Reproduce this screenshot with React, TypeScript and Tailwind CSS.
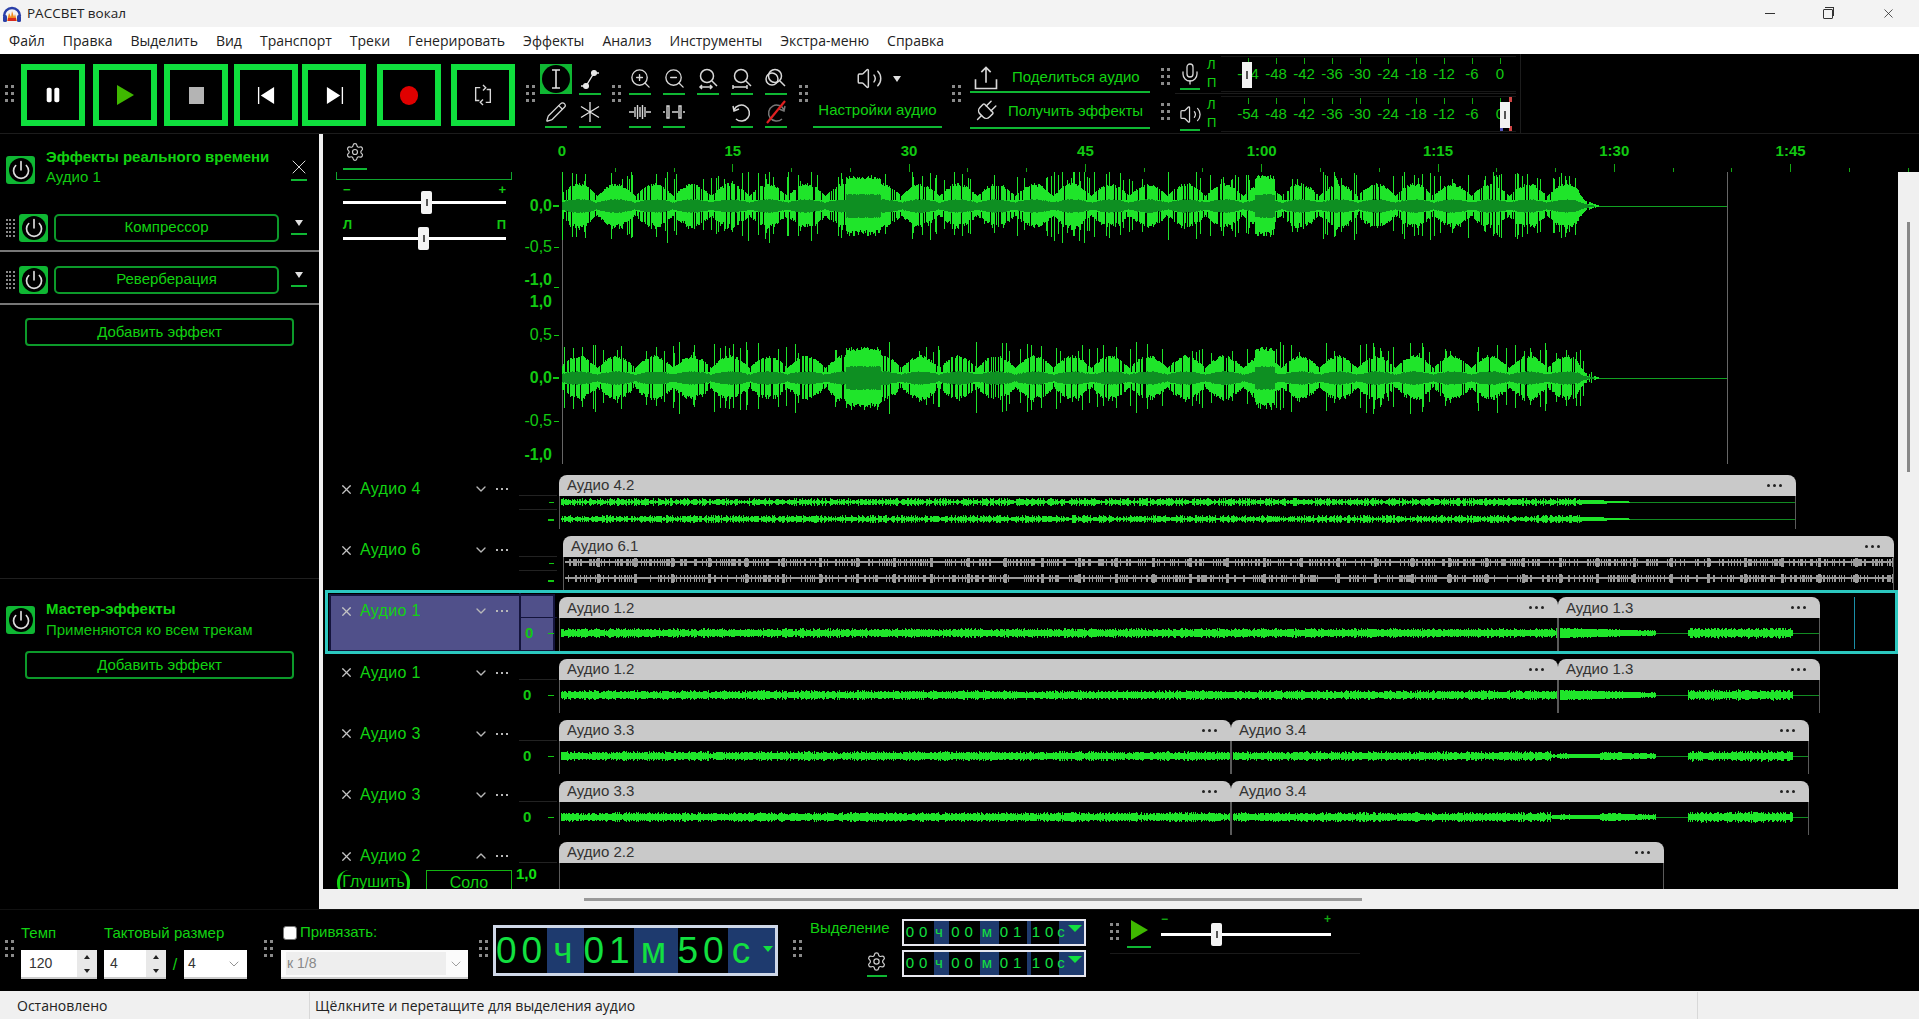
import React from 'react';
import { ChevronDown, ChevronUp, Mic, Pencil, Plug, Power, Settings, Volume2, X, ZoomIn, ZoomOut } from 'lucide-react';

const rng = (seed: number) => () => {
  seed = (seed + 0x6d2b79f5) | 0;
  let t = Math.imul(seed ^ (seed >>> 15), 1 | seed);
  t = (t + Math.imul(t ^ (t >>> 7), 61 | t)) ^ t;
  return ((t ^ (t >>> 14)) >>> 0) / 4294967296;
};

const mainWave = (seed: number, cy: number) => {
  const r = rng(seed);
  let bright = '';
  let dark = '';
  for (let x = 3; x < 1040; x++) {
    const phase = (x % 38) / 38;
    const loud = (x > 286 && x < 322) || (x > 695 && x < 716);
    let a = 10 + 12 * Math.sin(Math.PI * phase) * (0.8 + r() * 0.3);
    const roll = r();
    if (roll < 0.12) a = 25 + r() * 11;
    else if (roll < 0.26) a = 6;
    if (loud) a = 27 + r() * 4;
    let core = 3 + 3 * Math.sin(Math.PI * phase) + r();
    if (loud) core = 11 + r();
    const fade = x > 1018 ? Math.max(0.04, ((1040 - x) / 22) ** 1.6) : 1;
    a *= fade;
    core *= fade;
    bright += `M${x + 0.5} ${(cy - a).toFixed(1)}V${(cy + a * (0.85 + r() * 0.2)).toFixed(1)}`;
    dark += `M${x + 0.5} ${(cy - core).toFixed(1)}V${(cy + core).toFixed(1)}`;
  }
  return { bright, dark };
};

const smallWave = (kind: string, seed: number, offset: number, width: number, cy: number) => {
  const r = rng(seed + offset);
  let d = '';
  let flat = '';
  for (let x = 1; x < width; x++) {
    const g = offset + x;
    let a = 0;
    if (kind === 'a4') {
      a = g < 1020 ? 1.5 + r() * 2.5 : g < 1070 ? 2.5 - (g - 1020) * 0.04 : 0;
      if (r() < 0.15 && g < 1020) a = 1;
    } else if (kind === 'a6') {
      a = r() < 0.35 ? 3.5 : 1.2;
      if (g % 37 < 3) a = 4.5;
    } else {
      if (g < 1000) a = 2.4 + r() * 2.4;
      else if (g < 1096) a = 4.5 - ((g - 1000) / 96) * 2.8 + r();
      else if (g < 1128) a = 0;
      else if (g < 1233) a = 2.6 + r() * 3;
      if (kind === 'a3' && g > 990 && g < 1040) a *= 0.5;
    }
    if (a > 0) d += `M${x + 0.5} ${(cy - a).toFixed(1)}V${(cy + a).toFixed(1)}`;
    else flat += `M${x} ${cy + 0.5}h1`;
  }
  return { d, flat };
};

const Grip = ({ dense }: { dense?: boolean }) => (
  <div className={dense ? 'grid grid-cols-3 gap-[2px] w-[8px]' : 'grid grid-cols-2 gap-[4px] w-[8px]'}>
    {Array.from({ length: dense ? 15 : 6 }).map((_, i) => (
      <span key={i} className={dense ? 'w-[2px] h-[2px] bg-[#8a8a8a]' : 'w-[3px] h-[3px] bg-[#8a8a8a]'} />
    ))}
  </div>
);

const PowerBtn = () => (
  <div className="w-[29px] h-[28px] bg-[#0fb733] rounded-[3px] flex items-center justify-center shrink-0">
    <div className="w-[24px] h-[24px] rounded-full bg-black flex items-center justify-center">
      <Power size={20} strokeWidth={2} className="text-[#dddddd]" />
    </div>
  </div>
);

const TransportBtn = ({ children, className }: { children: React.ReactNode; className?: string }) => (
  <div className={`w-[64px] h-[62px] border-[6px] border-[#0fdf3d] flex items-center justify-center shrink-0 ${className ?? ''}`}>
    {children}
  </div>
);

const Tool = ({ children, bar = true }: { children: React.ReactNode; bar?: boolean }) => (
  <div className="relative w-[34px] h-[33px] flex items-center justify-center shrink-0">
    {children}
    {bar && <span className="absolute bottom-0 left-[6px] w-[22px] h-[2px] bg-[#0fb733]" />}
  </div>
);

const ic = 'w-[24px] h-[24px] text-[#d8d8d8]';

const FitIcon = ({ mode }: { mode: string }) => (
  <svg viewBox="0 0 24 24" className={ic} fill="none" stroke="currentColor" strokeWidth="1.5">
    <circle cx="11" cy="9" r="6.5" />
    <path d="M16 14l5 5" />
    {mode === 'sel' && <path d="M4 20h12M6 18l-2 2 2 2M14 18l2 2-2 2" />}
    {mode === 'fit' && <path d="M3 18v4M3 20h14M17 18v4" />}
    {mode === 'tog' && <circle cx="8" cy="12" r="6" />}
  </svg>
);

const TrimIcon = ({ wide }: { wide?: boolean }) => (
  <svg viewBox="0 0 24 24" className={ic} fill="none" stroke="currentColor" strokeWidth="1.4">
    {wide ? (
      <path d="M1 12h2M5 6v12h2V6zM10 12h6M17 6v12h2V6zM21 12h2" />
    ) : (
      <path d="M1 12h5M7 7v10M9.5 5v14M12 7v10M14.5 5v14M17 7v10M18 12h5" />
    )}
  </svg>
);

const Digits = ({ big, cells }: { big?: boolean; cells: { t: string; w: number; dark: boolean; caret?: boolean }[] }) => (
  <div className={big ? 'flex h-[51px] w-[285px] border-[3px] border-[#cfd8e8] bg-[#1e3a6e] shrink-0' : 'flex h-[27px] w-[184px] border-[2px] border-[#e8e8f0] bg-[#1e3a6e] shrink-0'}>
    {cells.map((c, i) => (
      <div
        key={i}
        style={{ width: c.w }}
        className={`relative flex items-center justify-center h-full text-[#12e040] ${c.dark ? 'bg-black' : 'bg-[#1e3a6e]'} ${big ? 'text-[37px] tracking-[5px]' : 'text-[15px] tracking-[5px]'}`}
      >
        <span className={c.caret ? 'mr-[16px]' : ''}>{c.t}</span>
        {c.caret && (
          <span className={big ? 'absolute right-[2px] top-[18px] border-x-[5px] border-x-transparent border-t-[6px] border-t-[#12e040]' : 'absolute right-[2px] top-[4px] border-x-[7px] border-x-transparent border-t-[7px] border-t-[#12e040]'} />
        )}
      </div>
    ))}
  </div>
);

const smallCells = [
  { t: '00', w: 30, dark: true },
  { t: 'ч', w: 15, dark: false },
  { t: '00', w: 31, dark: true },
  { t: 'м', w: 19, dark: false },
  { t: '01', w: 28, dark: true },
  { t: '', w: 4, dark: false },
  { t: '10', w: 28, dark: true },
  { t: 'с', w: 25, dark: false, caret: true },
];

const Slider = ({ pos, width = 163 }: { pos: number; width?: number }) => (
  <div className="relative h-[3px] bg-white" style={{ width }}>
    <div className="absolute top-[-10px] w-[11px] h-[23px] bg-[#f4f4f4] rounded-[2px] flex items-center justify-center" style={{ left: pos }}>
      <span className="w-[2px] h-[7px] bg-[#555555]" />
    </div>
  </div>
);

const Meter = ({ handle, hot }: { handle: number; hot?: boolean }) => (
  <div className="flex items-center h-[40px]">
    <div className="w-[14px] flex flex-col text-[13px] leading-[18px] text-[#12d312] shrink-0">
      <span>Л</span>
      <span>П</span>
    </div>
    <div className="relative w-[295px] h-[36px] border-y border-[#181818]">
      {['-54', '-48', '-42', '-36', '-30', '-24', '-18', '-12', '-6', '0'].map((v, i) => (
        <span key={v} className="absolute top-[8px] w-[30px] text-center text-[15px] leading-[18px] text-[#12c912]" style={{ left: 12 + i * 28 }}>
          {v}
        </span>
      ))}
      {Array.from({ length: 10 }).map((_, i) => (
        <span key={i} className="absolute top-[1px] w-px h-[6px] bg-[#12a912]" style={{ left: 27 + i * 28 }} />
      ))}
      {hot && (
        <>
          <span className="absolute left-[288px] top-0 w-[3px] h-[5px] bg-[#d04545]" />
          <span className="absolute left-[288px] bottom-0 w-[3px] h-[5px] bg-[#d04545]" />
          <span className="absolute left-[279px] bottom-0 w-[3px] h-[5px] bg-[#5555bb]" />
        </>
      )}
      <div className="absolute top-[5px] w-[10px] h-[26px] bg-[#f2f2f2] flex items-center justify-center" style={{ left: handle }}>
        <span className="w-[2px] h-[8px] bg-[#555555]" />
      </div>
    </div>
  </div>
);

type ClipDef = { label: string; x: number; w: number };
type TrackDef = { name: string; kind: string; clips: ClipDef[]; selected?: boolean; up?: boolean; channels: number[]; seed: number };

const a1 = [
  { label: 'Аудио 1.2', x: 0, w: 999 },
  { label: 'Аудио 1.3', x: 999, w: 262 },
];
const a3 = [
  { label: 'Аудио 3.3', x: 0, w: 672 },
  { label: 'Аудио 3.4', x: 672, w: 578 },
];
const tracks: TrackDef[] = [
  { name: 'Аудио 4', kind: 'a4', clips: [{ label: 'Аудио 4.2', x: 0, w: 1237 }], channels: [6, 23], seed: 11 },
  { name: 'Аудио 6', kind: 'a6', clips: [{ label: 'Аудио 6.1', x: 4, w: 1331 }], channels: [5, 21], seed: 21 },
  { name: 'Аудио 1', kind: 'a1', clips: a1, selected: true, channels: [15], seed: 31 },
  { name: 'Аудио 1', kind: 'a1', clips: a1, channels: [15], seed: 32 },
  { name: 'Аудио 3', kind: 'a3', clips: a3, channels: [15], seed: 41 },
  { name: 'Аудио 3', kind: 'a3', clips: a3, channels: [15], seed: 42 },
  { name: 'Аудио 2', kind: 'none', clips: [{ label: 'Аудио 2.2', x: 0, w: 1105 }], up: true, channels: [], seed: 51 },
];

const Clip = ({ clip, track, left }: { clip: ClipDef; track: TrackDef; left: number }) => (
  <div className="shrink-0 h-[54px] flex flex-col" style={{ width: clip.w, marginLeft: left }}>
    <div className="h-[21px] bg-[#c9c9c9] rounded-t-[8px] flex items-center justify-between pl-[8px] pr-[14px] text-[15px] text-[#333333]">
      <span>{clip.label}</span>
      <span className="flex gap-[3px]">
        <i className="w-[3px] h-[3px] rounded-full bg-[#222222]" />
        <i className="w-[3px] h-[3px] rounded-full bg-[#222222]" />
        <i className="w-[3px] h-[3px] rounded-full bg-[#222222]" />
      </span>
    </div>
    <div className="h-[33px] border-x border-[#5a5a5a]">
      <svg width={clip.w - 2} height={33} className="block" shapeRendering="crispEdges">
        {track.channels.map((cy, i) => {
          const w = smallWave(track.kind, track.seed + i, clip.x, clip.w - 2, cy);
          return (
            <g key={i}>
              <path d={w.d} stroke={track.kind === 'a6' ? '#9a9a9a' : '#1fe52a'} strokeWidth="1" fill="none" />
              <path d={w.flat} stroke="#128a22" strokeWidth="1" fill="none" />
            </g>
          );
        })}
      </svg>
    </div>
  </div>
);

const TrackRow = ({ track }: { track: TrackDef }) => {
  const sel = track.selected;
  return (
    <div className="relative flex h-[61.2px] shrink-0">
      {sel && <div className="absolute left-[6px] top-[3px] w-[226px] h-[58px] bg-[#50508a] border-2 border-[#14143c]" />}
      {sel && <div className="absolute left-[2px] right-0 top-[-1px] h-[64px] border-[3px] border-[#2cc8c0] z-20 pointer-events-none" />}
      <div className="relative w-[236px] shrink-0 flex">
        <div className="w-[196px] shrink-0 relative">
          <div className="flex items-center h-[24px] mt-[8px] pl-[16px]">
            <X size={15} className="text-[#c4c4c4] w-[15px] shrink-0" />
            <span className="ml-[6px] w-[108px] text-[16px] tracking-[0.3px] text-[#12d312]">{track.name}</span>
            {track.up ? <ChevronUp size={16} className="text-[#b8b8b8] ml-[5px]" /> : <ChevronDown size={16} className="text-[#b8b8b8] ml-[5px]" />}
            <span className="ml-[7px] flex gap-[3px]">
              <i className="w-[2px] h-[2px] bg-[#b8b8b8]" />
              <i className="w-[2px] h-[2px] bg-[#b8b8b8]" />
              <i className="w-[2px] h-[2px] bg-[#b8b8b8]" />
            </span>
          </div>
          {track.up && (
            <div className="flex mt-[2px] pl-[14px] gap-[16px] text-[16px] text-[#12d312]">
              <div className="w-[73px] h-[26px] rounded-[12px] border-x-[3px] border-[#12d312] text-center">Глушить</div>
              <div className="w-[86px] h-[26px] border border-[#12b512] text-center">Соло</div>
            </div>
          )}
        </div>
        <div className={`relative w-[38px] shrink-0 ${sel ? 'border-l-2 border-[#14143c]' : ''}`}>
          <span className={`absolute left-0 right-0 top-[26px] h-px ${sel ? 'bg-[#14143c] h-[2px]' : 'bg-[#222222]'}`} />
          {track.channels.length === 2 && (
            <>
              <span className="absolute left-0 right-0 top-[40px] h-px bg-[#222222]" />
              <span className="absolute right-[3px] top-[33px] w-[5px] h-[1px] bg-[#12c912]" />
              <span className="absolute right-[3px] top-[50px] w-[6px] h-[2px] bg-[#12c912]" />
            </>
          )}
          {track.channels.length === 1 && (
            <>
              <span className="absolute left-[4px] top-[32px] text-[15px] leading-[20px] font-bold text-[#12c912]">0</span>
              <span className="absolute right-[3px] top-[42px] w-[6px] h-[1px] bg-[#12c912]" />
            </>
          )}
          {track.up && <span className="absolute left-[-3px] top-[28px] text-[15px] leading-[20px] font-bold text-[#12e012]">1,0</span>}
        </div>
      </div>
      <div className="flex pt-[6px]">
        {track.clips.map((c, i) => (
          <Clip key={i} clip={c} track={track} left={i === 0 ? c.x : 0} />
        ))}
      </div>
      {sel && <span className="absolute left-[1531px] top-[6px] w-px h-[52px] bg-[#1a8fa8]" />}
    </div>
  );
};

const axis = [
  { y: 34, t: '0,0', b: true },
  { y: 75, t: '-0,5' },
  { y: 108, t: '-1,0', b: true },
  { y: 130, t: '1,0', b: true },
  { y: 163, t: '0,5' },
  { y: 206, t: '0,0', b: true },
  { y: 249, t: '-0,5' },
  { y: 283, t: '-1,0', b: true },
];

const wave1 = mainWave(7, 34);
const wave2 = mainWave(8, 206);

const rulerLabels = ['0', '15', '30', '45', '1:00', '1:15', '1:30', '1:45'];

export default function App() {
  return (
    <div className="w-[1919px] h-[1019px] overflow-hidden flex flex-col bg-black font-['Liberation_Sans',Arial,sans-serif]">
      {/* title bar */}
      <div className="h-[27px] shrink-0 bg-[#f3f3f3] flex items-center text-[14px] text-[#222222] font-['Open_Sans',sans-serif]">
        <svg viewBox="0 0 20 20" className="w-[20px] h-[20px] ml-[2px]">
          <path d="M2 12a8 8 0 0116 0" fill="none" stroke="#2a3fa8" strokeWidth="2.4" />
          <rect x="1" y="11" width="4" height="7" rx="1.5" fill="#2a3fa8" />
          <rect x="15" y="11" width="4" height="7" rx="1.5" fill="#2a3fa8" />
          <path d="M5 17l2-8 2 4 1-6 2 6 1-3 2 7z" fill="#f08a1e" />
          <rect x="6" y="14" width="8" height="3" fill="#d92b20" />
        </svg>
        <span className="ml-[5px] text-[13.5px]">РАССВЕТ вокал</span>
        <div className="ml-auto flex items-center text-[#222222]">
          <div className="w-[58px] flex justify-center">
            <span className="w-[10px] h-px bg-[#333333]" />
          </div>
          <div className="w-[58px] flex justify-center">
            <span className="relative w-[10px] h-[10px] border border-[#333333] rounded-[1px] bg-[#f3f3f3] after:content-[''] after:absolute after:left-[1px] after:top-[-3px] after:w-[9px] after:h-[9px] after:border-t after:border-r after:border-[#333333]" />
          </div>
          <div className="w-[62px] flex justify-center">
            <X size={15} strokeWidth={1.2} />
          </div>
        </div>
      </div>

      {/* menu bar */}
      <div className="h-[27px] shrink-0 bg-white flex items-center gap-[18px] pl-[9px] text-[14px] text-[#222222] font-['Open_Sans',sans-serif]">
        {['Файл', 'Правка', 'Выделить', 'Вид', 'Транспорт', 'Треки', 'Генерировать', 'Эффекты', 'Анализ', 'Инструменты', 'Экстра-меню', 'Справка'].map((m) => (
          <span key={m}>{m}</span>
        ))}
      </div>

      {/* top toolbars */}
      <div className="h-[80px] shrink-0 flex bg-black border-b border-[#1c1c1c]">
        <div className="w-[21px] flex items-center pl-[5px] shrink-0">
          <Grip />
        </div>
        <div className="flex pt-[10px] w-[494px] shrink-0">
          <TransportBtn>
            <svg viewBox="0 0 20 20" className="w-[18px] h-[18px]"><rect x="3" y="2" width="5.5" height="16" rx="2" fill="#fff" /><rect x="11.5" y="2" width="5.5" height="16" rx="2" fill="#fff" /></svg>
          </TransportBtn>
          <TransportBtn className="ml-[8px]">
            <svg viewBox="0 0 20 20" className="w-[20px] h-[20px]"><path d="M2 0l17 10L2 20z" fill="#3fb800" /></svg>
          </TransportBtn>
          <TransportBtn className="ml-[7px]">
            <span className="w-[15px] h-[17px] bg-[#b4b4b4]" />
          </TransportBtn>
          <TransportBtn className="ml-[6px]">
            <svg viewBox="0 0 20 20" className="w-[19px] h-[19px]"><path d="M1 1h1.4v18H1zM18 1v18L4 10z" fill="#fff" /></svg>
          </TransportBtn>
          <TransportBtn className="ml-[4px]">
            <svg viewBox="0 0 20 20" className="w-[19px] h-[19px]"><path d="M17.6 1H19v18h-1.4zM2 1v18l14-9z" fill="#fff" /></svg>
          </TransportBtn>
          <TransportBtn className="ml-[11px]">
            <span className="w-[18px] h-[19px] rounded-full bg-[#e00000]" />
          </TransportBtn>
          <TransportBtn className="ml-[10px]">
            <svg viewBox="0 0 24 24" className="w-[22px] h-[22px]" fill="none" stroke="#d8d8d8" strokeWidth="1.5">
              <path d="M9 4H4v14h4M15 20h5V6h-4M12 1l3 3-3 3M12 17l-3 3 3 3" />
            </svg>
          </TransportBtn>
        </div>
        <div className="w-[24px] flex items-center pl-[11px] shrink-0"><Grip /></div>
        <div className="w-[68px] pt-[8px] shrink-0 flex flex-wrap content-start">
          <div className="relative w-[34px] h-[33px] flex items-center justify-center">
            <div className="w-[32px] h-[30px] bg-[#0fb733] flex items-center justify-center">
              <div className="w-[28px] h-[28px] rounded-full bg-black flex items-center justify-center">
                <svg viewBox="0 0 24 24" className="w-[24px] h-[24px]" fill="none" stroke="#e0e0e0" strokeWidth="1.6"><path d="M8 3h8M12 3v18M8 21h8" /></svg>
              </div>
            </div>
          </div>
          <Tool>
            <svg viewBox="0 0 24 24" className="w-[24px] h-[24px]" fill="#e8e8e8" stroke="#e8e8e8" strokeWidth="1.3"><path d="M3 19h5l8-13h5" fill="none" /><circle cx="8" cy="19" r="2.4" /><circle cx="16" cy="6" r="2.4" /></svg>
          </Tool>
          <Tool><Pencil size={22} strokeWidth={1.4} className="text-[#d8d8d8]" /></Tool>
          <Tool>
            <svg viewBox="0 0 24 24" className="w-[24px] h-[24px]" fill="none" stroke="#e4e4e4" strokeWidth="1.3"><path d="M12 2v20M3 6.5l18 11M21 6.5l-18 11" /></svg>
          </Tool>
        </div>
        <div className="w-[16px] flex items-center pl-[5px] shrink-0"><Grip /></div>
        <div className="w-[170px] pt-[8px] shrink-0 flex flex-wrap content-start">
          <Tool><ZoomIn size={23} strokeWidth={1.4} className="text-[#d8d8d8]" /></Tool>
          <Tool><ZoomOut size={23} strokeWidth={1.4} className="text-[#d8d8d8]" /></Tool>
          <Tool><FitIcon mode="sel" /></Tool>
          <Tool><FitIcon mode="fit" /></Tool>
          <Tool><FitIcon mode="tog" /></Tool>
          <Tool><TrimIcon /></Tool>
          <Tool><TrimIcon wide /></Tool>
          <div className="w-[34px] h-[33px] shrink-0" />
          <Tool>
            <svg viewBox="0 0 24 24" className={ic} fill="none" stroke="currentColor" strokeWidth="1.5"><path d="M6 19a8 8 0 10-2-9M3 6l1 5 5-2" /></svg>
          </Tool>
          <Tool>
            <svg viewBox="0 0 24 24" className="w-[24px] h-[24px]" fill="none" strokeWidth="1.5"><path d="M18 19a8 8 0 112-9M21 6l-1 5-5-2" stroke="#777777" /><path d="M21 1L3 23" stroke="#e02020" strokeWidth="2.2" /></svg>
          </Tool>
        </div>
        <div className="w-[20px] flex items-center pl-[6px] shrink-0"><Grip /></div>
        <div className="w-[129px] pt-[8px] shrink-0 flex flex-col items-center">
          <div className="h-[33px] flex items-center gap-[10px] ml-[2px]">
            <Volume2 size={27} strokeWidth={1.3} className="text-[#d8d8d8]" />
            <span className="border-x-[4px] border-x-transparent border-t-[6px] border-t-[#e0e0e0]" />
          </div>
          <div className="h-[33px] w-full flex items-center justify-center text-[15px] text-[#12d312] border-b-2 border-[#0fb733]">Настройки аудио</div>
        </div>
        <div className="w-[28px] flex items-center pl-[10px] shrink-0"><Grip /></div>
        <div className="w-[180px] pt-[8px] shrink-0 flex flex-col">
          <div className="h-[31px] pt-[2px] flex items-center border-b-2 border-[#0fb733]">
            <svg viewBox="0 0 24 24" className="w-[28px] h-[28px] ml-[2px]" fill="none" stroke="#d8d8d8" strokeWidth="1.4"><path d="M3 13v8h18v-8M12 16V3M8 7l4-4 4 4" /></svg>
            <span className="ml-[12px] text-[15px] text-[#12d312]">Поделиться аудио</span>
          </div>
          <div className="h-[36px] pt-[3px] flex items-center border-b-2 border-[#0fb733]">
            <Plug size={27} strokeWidth={1.3} className="text-[#d8d8d8] ml-[2px] rotate-45" />
            <span className="ml-[9px] text-[15px] text-[#12d312]">Получить эффекты</span>
          </div>
        </div>
        <div className="w-[23px] flex items-center pl-[6px] shrink-0 flex-col justify-center gap-[18px]">
          <Grip />
          <Grip />
        </div>
        <div className="flex flex-col pl-[2px] shrink-0">
          <div className="flex items-center h-[40px] border-b border-[#1c1c1c]">
            <div className="relative w-[30px] h-[33px] flex justify-center items-center">
              <Mic size={24} strokeWidth={1.3} className="text-[#d8d8d8]" />
              <span className="absolute bottom-0 left-[5px] w-[20px] h-[2px] bg-[#0fb733]" />
            </div>
            <div className="ml-[2px]"><Meter handle={21} /></div>
          </div>
          <div className="flex items-center h-[40px]">
            <div className="relative w-[30px] h-[33px] flex justify-center items-center">
              <Volume2 size={23} strokeWidth={1.3} className="text-[#d8d8d8]" />
              <span className="absolute bottom-0 left-[5px] w-[20px] h-[2px] bg-[#0fb733]" />
            </div>
            <div className="ml-[2px]"><Meter handle={279} hot /></div>
          </div>
        </div>
        <div className="ml-[4px] w-px bg-[#1c1c1c]" />
      </div>

      {/* main */}
      <div className="flex-1 min-h-0 flex">
        {/* effects panel */}
        <div className="w-[319px] shrink-0 bg-black flex flex-col">
          <div className="relative h-[73px] flex pl-[6px] pt-[22px] shrink-0">
            <PowerBtn />
            <div className="ml-[11px] -mt-[10px] pt-[1px]">
              <div className="text-[15px] leading-[20px] font-bold text-[#12d312]">Эффекты реального времени</div>
              <div className="text-[15px] leading-[20px] text-[#12c912]">Аудио 1</div>
            </div>
            <div className="absolute left-[287px] top-[21px] flex flex-col items-center">
              <X size={24} strokeWidth={1} className="text-[#d8d8d8]" />
              <span className="w-[16px] h-[2px] bg-[#0fb733]" />
            </div>
          </div>
          <div className="h-[45px] pb-[2px] flex items-center pl-[6px] border-b-2 border-[#777777] shrink-0">
            <Grip dense />
            <div className="ml-[5px]"><PowerBtn /></div>
            <div className="ml-[6px] w-[225px] h-[28px] rounded-[5px] border-2 border-[#0c9a2a] flex items-center justify-center text-[15px] text-[#12d312]">Компрессор</div>
            <div className="ml-[12px] flex flex-col items-center gap-[7px]">
              <span className="border-x-[4px] border-x-transparent border-t-[6px] border-t-[#e0e0e0]" />
              <span className="w-[16px] h-[2px] bg-[#0fb733]" />
            </div>
          </div>
          <div className="h-[53px] pt-[6px] pb-[2px] flex items-center pl-[6px] border-b-2 border-[#777777] shrink-0">
            <Grip dense />
            <div className="ml-[5px]"><PowerBtn /></div>
            <div className="ml-[6px] w-[225px] h-[28px] rounded-[5px] border-2 border-[#0c9a2a] flex items-center justify-center text-[15px] text-[#12d312]">Реверберация</div>
            <div className="ml-[12px] flex flex-col items-center gap-[7px]">
              <span className="border-x-[4px] border-x-transparent border-t-[6px] border-t-[#e0e0e0]" />
              <span className="w-[16px] h-[2px] bg-[#0fb733]" />
            </div>
          </div>
          <div className="mt-[13px] ml-[25px] w-[269px] h-[28px] rounded-[4px] border-2 border-[#0c9a2a] flex items-center justify-center text-[15px] text-[#12d312] shrink-0">Добавить эффект</div>
          <div className="mt-[232px] border-t border-[#1f1f1f] h-[101px] flex pl-[6px] pt-[27px] shrink-0">
            <PowerBtn />
            <div className="ml-[11px] -mt-[8px]">
              <div className="text-[15px] leading-[21px] font-bold text-[#12d312]">Мастер-эффекты</div>
              <div className="text-[15px] leading-[21px] text-[#12c912]">Применяются ко всем трекам</div>
            </div>
          </div>
          <div className="ml-[25px] w-[269px] h-[28px] -mt-[28px] rounded-[4px] border-2 border-[#0c9a2a] flex items-center justify-center text-[15px] text-[#12d312] shrink-0">Добавить эффект</div>
        </div>

        {/* tracks */}
        <div className="flex-1 min-w-0 flex flex-col border-l-[4px] border-[#f0f0f0]">
          <div className="flex-1 min-h-0 flex flex-col overflow-hidden">
            <div className="relative h-[38px] shrink-0">
              <div className="absolute left-[20px] top-[8px] w-[24px] flex flex-col items-center">
                <Settings size={20} strokeWidth={1.4} className="text-[#cccccc]" />
                <span className="mt-[6px] w-[24px] h-[2px] bg-[#0fb733]" />
              </div>
              {rulerLabels.map((l, i) => (
                <span key={l} className="absolute top-[8px] w-[50px] text-center text-[15px] font-bold text-[#12c912] leading-[18px]" style={{ left: i === 0 ? 214 : 208.5 + i * 176.3 }}>
                  {l}
                </span>
              ))}
              {Array.from({ length: 26 }).map((_, i) => (
                <span key={i} className={`absolute bottom-0 w-px bg-[#12a912] ${(i + 1) % 3 === 0 ? 'h-[8px]' : 'h-[4px]'}`} style={{ left: 233 + (i + 1) * 58.77 }} />
              ))}
            </div>
            <div className="flex-1 min-h-0 flex">
              <div className="flex-1 min-w-0 flex flex-col overflow-hidden">
                {/* stereo track */}
                <div className="relative h-[297px] shrink-0 flex">
                  <div className="relative w-[236px] shrink-0">
                    <div className="relative ml-[13px] w-[176px] h-[11px] -mt-[3px] border-x border-b border-[#0fa52e] flex justify-center">
                      <span className="absolute top-[-4px] block h-[4px] overflow-hidden text-[13px] leading-[13px] font-bold text-[#12c912]">
                        <span className="block -mt-[5px]">Эффекты</span>
                      </span>
                    </div>
                    <div className="ml-[20px] mt-[3px] w-[163px] flex justify-between text-[13px] leading-[13px] text-[#12c912] font-bold">
                      <span>−</span>
                      <span>+</span>
                    </div>
                    <div className="ml-[20px] mt-[5px]"><Slider pos={78} /></div>
                    <div className="ml-[20px] mt-[14px] w-[163px] flex justify-between text-[13px] leading-[13px] text-[#12c912] font-bold">
                      <span>Л</span>
                      <span>П</span>
                    </div>
                    <div className="ml-[20px] mt-[6px]"><Slider pos={75} /></div>
                    {axis.map((a, i) => (
                      <span
                        key={i}
                        className={`absolute right-[7px] text-[16px] leading-[18px] text-[#12c912] ${a.b ? 'font-bold' : ''}`}
                        style={{ top: a.y - 9 }}
                      >
                        {a.t}
                      </span>
                    ))}
                    <span className="absolute right-0 top-[33px] w-[6px] h-[2px] bg-[#12c912]" />
                    <span className="absolute right-0 top-[75px] w-[5px] h-px bg-[#12c912]" />
                    <span className="absolute right-0 top-[115px] w-[5px] h-px bg-[#12c912]" />
                    <span className="absolute right-0 top-[163px] w-[5px] h-px bg-[#12c912]" />
                    <span className="absolute right-0 top-[205px] w-[6px] h-[2px] bg-[#12c912]" />
                    <span className="absolute right-0 top-[249px] w-[5px] h-px bg-[#12c912]" />
                  </div>
                  <svg width={1340} height={296} className="block shrink-0" shapeRendering="crispEdges">
                    <path d="M3.5 0V292M1168.5 0V292" stroke="#666666" strokeWidth="1" />
                    <path d={wave1.bright} stroke="#1fe52a" strokeWidth="1" fill="none" />
                    <path d={wave1.dark} stroke="#0e8f22" strokeWidth="1" fill="none" />
                    <path d={wave2.bright} stroke="#1fe52a" strokeWidth="1" fill="none" />
                    <path d={wave2.dark} stroke="#0e8f22" strokeWidth="1" fill="none" />
                    <path d="M1040 34.5H1168M1040 206.5H1168" stroke="#12a022" strokeWidth="1" />
                  </svg>
                </div>
                {tracks.map((t, i) => (
                  <TrackRow key={i} track={t} />
                ))}
              </div>
              <div className="w-[21px] shrink-0 bg-[#f0f0f0] pt-[50px] flex justify-center">
                <span className="w-[3px] h-[250px] bg-[#888888]" />
              </div>
            </div>
          </div>
          <div className="h-[20px] shrink-0 bg-[#f0f0f0] flex items-center pl-[261px]">
            <span className="w-[778px] h-[3px] bg-[#999999]" />
          </div>
        </div>
      </div>

      {/* bottom toolbars */}
      <div className="h-[82px] shrink-0 bg-black flex border-t border-[#111111]">
        <div className="w-[21px] pl-[5px] pt-[30px] shrink-0"><Grip /></div>
        <div className="w-[76px] pt-[14px] shrink-0">
          <div className="text-[15px] leading-[18px] text-[#12d312]">Темп</div>
          <div className="mt-[8px] w-[76px] h-[29px] bg-white flex items-center border-b-2 border-[#cccccc]">
            <span className="ml-[8px] text-[14px] text-[#333333]">120</span>
            <div className="ml-auto w-[20px] h-full flex flex-col justify-center gap-[1px] bg-[#e8e8e8]">
              <span className="h-[13px] bg-[#e8e8e8] flex items-center justify-center"><i className="border-x-[3px] border-x-transparent border-b-[4px] border-b-[#222222]" /></span>
              <span className="h-[13px] bg-[#e8e8e8] flex items-center justify-center"><i className="border-x-[3px] border-x-transparent border-t-[4px] border-t-[#222222]" /></span>
            </div>
          </div>
        </div>
        <div className="w-[143px] ml-[7px] pt-[14px] shrink-0">
          <div className="text-[15px] leading-[18px] text-[#12d312] whitespace-nowrap">Тактовый размер</div>
          <div className="mt-[8px] flex items-center">
            <div className="w-[62px] h-[29px] bg-white flex items-center border-b-2 border-[#cccccc]">
              <span className="ml-[6px] text-[14px] text-[#333333]">4</span>
              <div className="ml-auto w-[20px] h-full flex flex-col justify-center gap-[1px] bg-[#e8e8e8]">
                <span className="h-[13px] flex items-center justify-center"><i className="border-x-[3px] border-x-transparent border-b-[4px] border-b-[#222222]" /></span>
                <span className="h-[13px] flex items-center justify-center"><i className="border-x-[3px] border-x-transparent border-t-[4px] border-t-[#222222]" /></span>
              </div>
            </div>
            <span className="w-[18px] text-center text-[16px] text-[#12d312]">/</span>
            <div className="w-[63px] h-[29px] bg-white flex items-center border-b-2 border-[#cccccc]">
              <span className="ml-[4px] text-[14px] text-[#333333]">4</span>
              <ChevronDown size={16} strokeWidth={1.2} className="ml-auto mr-[5px] text-[#777777]" />
            </div>
          </div>
        </div>
        <div className="w-[34px] pl-[17px] pt-[30px] shrink-0"><Grip /></div>
        <div className="w-[187px] pt-[13px] shrink-0">
          <div className="flex items-center h-[19px] pl-[2px]">
            <span className="w-[14px] h-[14px] bg-white border border-[#777777] rounded-[3px]" />
            <span className="ml-[3px] text-[15px] text-[#12d312]">Привязать:</span>
          </div>
          <div className="mt-[8px] w-[187px] h-[29px] bg-[#fbfbfb] flex items-center border-b-2 border-[#cccccc]">
            <span className="ml-[5px] w-[160px] h-[23px] bg-[#eeeeee] text-[14px] leading-[23px] text-[#888888] pl-[1px]">к 1/8</span>
            <ChevronDown size={16} strokeWidth={1.2} className="ml-auto mr-[4px] text-[#888888]" />
          </div>
        </div>
        <div className="w-[25px] pl-[11px] pt-[30px] shrink-0"><Grip /></div>
        <div className="pt-[15px] shrink-0">
          <Digits
            big
            cells={[
              { t: '00', w: 51, dark: true },
              { t: 'ч', w: 37, dark: false },
              { t: '01', w: 50, dark: true },
              { t: 'м', w: 44, dark: false },
              { t: '50', w: 50, dark: true },
              { t: 'с', w: 47, dark: false, caret: true },
            ]}
          />
        </div>
        <div className="w-[32px] pl-[15px] pt-[30px] shrink-0"><Grip /></div>
        <div className="w-[92px] shrink-0 pt-[9px] relative">
          <div className="text-[15px] leading-[18px] text-[#12d312] whitespace-nowrap">Выделение</div>
          <div className="absolute left-[56px] top-[41px] flex flex-col items-center">
            <Settings size={21} strokeWidth={1.4} className="text-[#cccccc]" />
            <span className="mt-[3px] w-[20px] h-[2px] bg-[#0fb733]" />
          </div>
        </div>
        <div className="pt-[9px] flex flex-col gap-[4px] shrink-0">
          <Digits cells={smallCells} />
          <Digits cells={smallCells} />
        </div>
        <div className="ml-[24px] w-[250px] h-[44px] flex border-b border-[#1a1a1a] shrink-0">
          <div className="w-[10px] pt-[13px] shrink-0"><Grip /></div>
          <div className="relative ml-[6px] mt-[10px] w-[26px] h-[28px] flex justify-center shrink-0">
            <svg viewBox="0 0 20 20" className="w-[20px] h-[20px]"><path d="M2 0l17 10L2 20z" fill="#3fb800" /></svg>
            <span className="absolute bottom-0 left-[1px] w-[24px] h-[2px] bg-[#0fb733]" />
          </div>
          <div className="ml-[9px] pt-[2px]">
            <div className="w-[170px] flex justify-between text-[12px] leading-[14px] font-bold text-[#12a912]">
              <span>−</span>
              <span>+</span>
            </div>
            <div className="mt-[7px]"><Slider pos={50} width={170} /></div>
          </div>
        </div>
      </div>

      {/* status bar */}
      <div className="h-[28px] pt-[1px] shrink-0 bg-[#f0f0f0] flex items-center text-[14px] text-[#222222] font-['Open_Sans',sans-serif]">
        <div className="w-[310px] pl-[17px] h-full flex items-center border-r border-[#d8d8d8]">Остановлено</div>
        <div className="w-[1388px] pl-[5px] h-full flex items-center border-r border-[#d8d8d8]">Щёлкните и перетащите для выделения аудио</div>
      </div>
    </div>
  );
}
